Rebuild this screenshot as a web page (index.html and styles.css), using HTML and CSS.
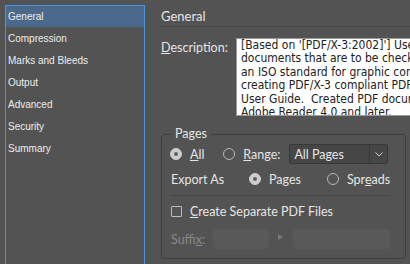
FILE: index.html
```html
<!DOCTYPE html>
<html lang="en">
<head>
    <meta charset="UTF-8">
    <title>Export Adobe PDF - General</title>
    <link rel="stylesheet" href="styles.css">
</head>
<body>
    <ul class="sidebar">
        <li class="nav-item selected">General</li>
        <li class="nav-item">Compression</li>
        <li class="nav-item">Marks and Bleeds</li>
        <li class="nav-item">Output</li>
        <li class="nav-item">Advanced</li>
        <li class="nav-item">Security</li>
        <li class="nav-item">Summary</li>
    </ul>

    <div class="main">
        <div class="page-title">General</div>

        <div class="desc-row">
            <label class="desc-label"><u>D</u>escription:</label>
            <div class="desc-box">[Based on '[PDF/X-3:2002]'] Use these settings to create Adobe PDF
documents that are to be checked or must conform to PDF/X-3:2002,
an ISO standard for graphic content exchange. For more information on
creating PDF/X-3 compliant PDF documents, please refer to the Acrobat
User Guide.  Created PDF documents can be opened with Acrobat and
Adobe Reader 4.0 and later.</div>
        </div>

        <fieldset class="pages">
            <legend>Pages</legend>

            <div class="row range-row">
                <span class="radio checked"></span>
                <span class="opt-label"><u>A</u>ll</span>
                <span class="radio range-radio"></span>
                <span class="opt-label"><u>R</u>ange:</span>
                <div class="dropdown">
                    <span class="dropdown-text">All Pages</span>
                    <span class="dropdown-arrow">
                        <svg width="8" height="5" viewBox="0 0 8 5"><polyline points="0.5,0.5 4,4 7.5,0.5" fill="none" stroke="#cfcfcf" stroke-width="1"/></svg>
                    </span>
                </div>
            </div>

            <div class="row export-row">
                <span class="export-label">Export As</span>
                <span class="radio checked"></span>
                <span class="opt-label">Pa<u>g</u>es</span>
                <span class="radio spreads-radio"></span>
                <span class="opt-label">Spr<u>e</u>ads</span>
            </div>

            <div class="divider"></div>

            <div class="row check-row">
                <span class="checkbox"></span>
                <span class="opt-label"><u>C</u>reate Separate PDF Files</span>
            </div>

            <div class="row suffix-row">
                <span class="suffix-label">Suffi<u>x</u>:</span>
                <span class="field short"></span>
                <span class="tri"></span>
                <span class="field long"></span>
            </div>
        </fieldset>
    </div>
</body>
</html>
```

FILE: styles.css
```css
body {
    margin: 0;
    height: 264px;
    overflow: hidden;
    background-color: #535353;
    color: #e6e6e6;
    font-family: Lato, "Liberation Sans", Arial, sans-serif;
    display: flex;
}

/* left list of panels */
.sidebar {
    list-style: none;
    margin: 5px 0 0 5px;
    padding: 0;
    width: 140px;
    height: 259px;
    box-sizing: border-box;
    border: 1px solid #4a94e2;
    border-bottom: none;
    flex-shrink: 0;
}

.nav-item {
    height: 22px;
    line-height: 22px;
    padding-left: 2px;
    font-family: "Liberation Sans", Arial, sans-serif;
    font-size: 10px;
    color: #ededed;
}

.nav-item.selected {
    height: 21px;
    line-height: 21px;
    margin-bottom: 1px;
    background-color: #4b6a8b;
}

.main {
    flex: 1;
    padding-left: 15px;
    min-width: 0;
}

.page-title {
    padding: 8px 0 2px 1px;
    line-height: 16px;
    font-size: 13px;
    border-bottom: 1px solid #444;
}

.desc-row {
    display: flex;
    margin: 11px 0 0 1px;
}

.desc-label {
    width: 75px;
    flex-shrink: 0;
    padding-top: 3px;
    line-height: 14px;
    font-size: 12.5px;
}

.desc-box {
    flex: 1;
    height: 78px;
    box-sizing: border-box;
    background-color: #fff;
    border: 1px solid #9a9a9a;
    border-right: none;
    padding: 0 0 0 4px;
    font-family: "DejaVu Sans Condensed", "DejaVu Sans", sans-serif;
    font-size: 12px;
    line-height: 13.4px;
    color: #222;
    white-space: pre;
    overflow: hidden;
}

/* Pages group */
.pages {
    margin: 11px 4px 0 1px;
    padding: 2px 0 9px 9px;
    border: 1px solid #3e3e3e;
    border-radius: 3px;
    min-width: 0;
}

.pages legend {
    padding: 0 4px;
    line-height: 14px;
    font-size: 12.5px;
}

.row {
    display: flex;
    align-items: center;
    font-size: 12.5px;
}

.range-row {
    height: 22px;
}

.export-row {
    height: 22px;
    margin-top: 3px;
}

.check-row {
    height: 22px;
    margin-top: 4px;
}

.suffix-row {
    height: 20px;
    margin-top: 7px;
}

.radio {
    width: 12px;
    height: 12px;
    box-sizing: border-box;
    border: 1px solid #b8b8b8;
    border-radius: 50%;
    flex-shrink: 0;
    position: relative;
    margin-left: -1px;
}

.radio.checked {
    background-color: #cdcdcd;
    border-color: #cdcdcd;
}

.radio.checked::after {
    content: "";
    position: absolute;
    left: 3px;
    top: 3px;
    width: 4px;
    height: 4px;
    border-radius: 50%;
    background-color: #5e5e5e;
}

.opt-label {
    margin-left: 8px;
}

.range-radio {
    margin-left: 19px;
}

.dropdown {
    margin-left: 9px;
    width: 99px;
    height: 20px;
    box-sizing: border-box;
    background-color: #464646;
    border: 1px solid #383838;
    border-radius: 2px;
    display: flex;
    align-items: center;
}

.dropdown-text {
    flex: 1;
    padding-left: 4px;
}

.dropdown-arrow {
    width: 17px;
    height: 18px;
    border-left: 1px solid #383838;
    display: flex;
    align-items: center;
    justify-content: center;
}

.export-label {
    width: 79px;
}

.spreads-radio {
    margin-left: 26px;
}

.divider {
    height: 1px;
    margin: 5px 15px 0 0;
    background-color: #474747;
}

.checkbox {
    width: 11px;
    height: 11px;
    box-sizing: border-box;
    border: 1px solid #bdbdbd;
    border-radius: 1px;
    flex-shrink: 0;
}

.check-row .opt-label {
    margin-left: 8px;
}

.suffix-label {
    width: 42px;
    color: #8a8a8a;
}

.field {
    height: 20px;
    background-color: #595959;
    border-radius: 2px;
}

.field.short {
    width: 56px;
}

.field.long {
    width: 97px;
}

.tri {
    width: 0;
    height: 0;
    margin: 0 10px 4px 9px;
    border-top: 3px solid transparent;
    border-bottom: 3px solid transparent;
    border-left: 5px solid #777;
}
```
